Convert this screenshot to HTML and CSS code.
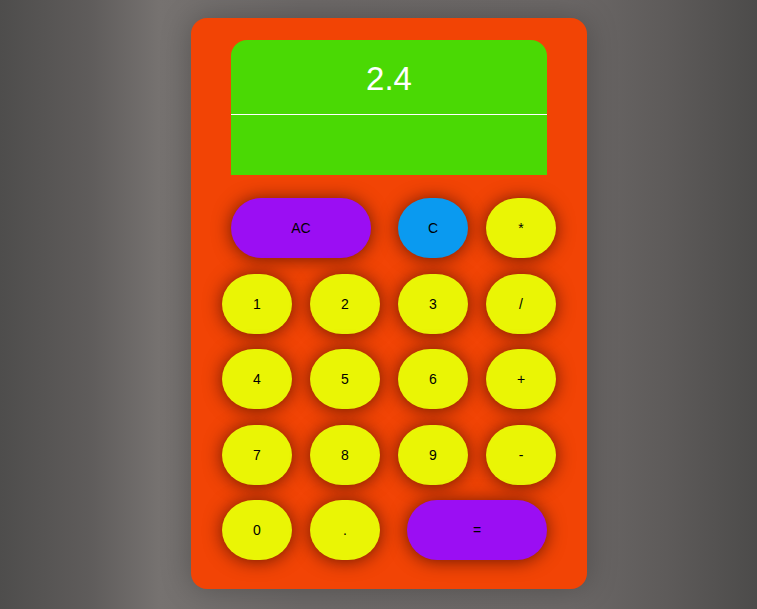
FILE: index.html
```html
<!DOCTYPE html>
<html lang="en">
<head>
<meta charset="utf-8">
<title>Calculator</title>
<link rel="stylesheet" href="styles.css">
</head>
<body>
<div class="calculator">
  <div class="display">
    <div class="previous">2.4</div>
    <div class="current"></div>
  </div>
  <div class="keys">
    <button class="key span-two purple">AC</button>
    <button class="key blue">C</button>
    <button class="key">*</button>
    <button class="key">1</button>
    <button class="key">2</button>
    <button class="key">3</button>
    <button class="key">/</button>
    <button class="key">4</button>
    <button class="key">5</button>
    <button class="key">6</button>
    <button class="key">+</button>
    <button class="key">7</button>
    <button class="key">8</button>
    <button class="key">9</button>
    <button class="key">-</button>
    <button class="key">0</button>
    <button class="key">.</button>
    <button class="key span-two purple">=</button>
  </div>
</div>
</body>
</html>
```

FILE: styles.css
```css
html, body {
  margin: 0;
  height: 100%;
}

body {
  background: linear-gradient(to right, #4e4d4c 0%, #5f5c5b 12%, #767270 21%, #6d6968 40%, #6c6867 75%, #5e5b5a 88%, #4c4b4a 100%);
  font-family: "Liberation Sans", Arial, sans-serif;
  overflow: hidden;
}

.calculator {
  box-sizing: border-box;
  width: 396px;
  height: 571px;
  margin: 18px 0 0 191px;
  padding: 22px 31px 29px;
  background: #f24405;
  border-radius: 16px;
  box-shadow: 0 0 30px rgba(0, 0, 0, 0.25);
}

.display {
  margin: 0 9px;
  height: 135px;
  background: #4ad904;
  border-radius: 16px 16px 0 0;
  display: flex;
  flex-direction: column;
}

.previous {
  height: 75px;
  border-bottom: 1px solid #ffffff;
  display: flex;
  align-items: center;
  justify-content: center;
  padding-top: 4px;
  box-sizing: border-box;
  color: #ffffff;
  font-size: 33px;
}

.current {
  flex: 1;
}

.keys {
  margin-top: 23px;
  display: grid;
  grid-template-columns: repeat(4, 70px);
  grid-auto-rows: 60px;
  column-gap: 18px;
  row-gap: 15.5px;
}

.key {
  width: 70px;
  height: 60px;
  border: none;
  border-radius: 32px / 30px;
  background: #eaf505;
  color: #000000;
  font-family: "Liberation Sans", Arial, sans-serif;
  font-size: 14px;
  padding: 0;
  justify-self: center;
  box-shadow: 0 1px 18px rgba(50, 5, 0, 0.7);
}

.span-two {
  grid-column: span 2;
  width: 140px;
  border-radius: 30px;
}

.purple {
  background: #9b0ef3;
}

.blue {
  background: #0a9af0;
}
```
